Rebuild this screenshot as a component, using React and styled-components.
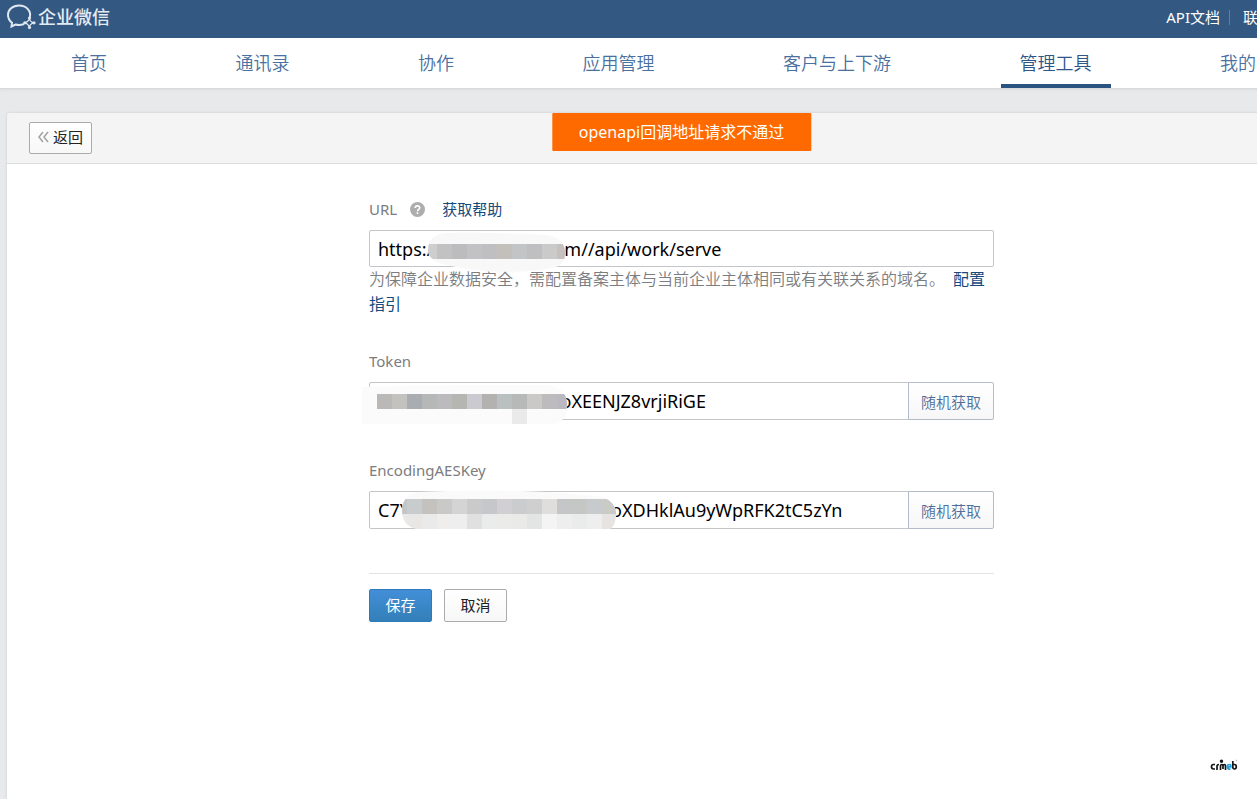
import React from "react";
import styled, { createGlobalStyle, css } from "styled-components";

const GlobalStyle = createGlobalStyle`
  * {
    box-sizing: border-box;
  }
  body {
    margin: 0;
    background: #e8e9eb;
    font-family: "Noto Sans", "Noto Sans CJK SC", sans-serif;
    font-size: 15px;
  }
  button, input {
    font-family: inherit;
  }
  a {
    text-decoration: none;
  }
`;

const Viewport = styled.div`
  overflow-x: hidden;
`;
const Page = styled.div`
  display: flex;
  flex-direction: column;
  min-width: 1363px;
  min-height: 100vh;
`;

const TopBar = styled.header`
  display: flex;
  align-items: center;
  justify-content: space-between;
  height: 38px;
  padding: 0 7px 4px;
  background: #335983;
`;
const Brand = styled.a`
  display: flex;
  align-items: center;
  gap: 2px;
  color: #e4eaf2;
  font-size: 18px;
  font-weight: 500;
  line-height: 24px;
`;
const TopLinks = styled.div`
  display: flex;
  align-items: center;
`;
const TopLink = styled.a`
  color: #fff;
  line-height: 20px;

  & + & {
    margin-left: 9px;
    padding-left: 14px;
    background: linear-gradient(#5f80a6, #5f80a6) left center / 1px 15px no-repeat;
  }
`;

const Nav = styled.nav`
  display: flex;
  justify-content: space-between;
  height: 51px;
  padding: 0 52px;
  background: #fff;
  border-bottom: 1px solid #d8d9db;
  box-shadow: 0 1px 3px rgba(0, 0, 0, 0.06);
`;
const NavItem = styled.a`
  height: 50px;
  padding: 0 19px;
  border-bottom: 4px solid ${(p) => (p.$active ? "#2b5380" : "transparent")};
  color: ${(p) => (p.$active ? "#2f5688" : "#4a70a0")};
  font-size: 18px;
  font-weight: 350;
  line-height: 50px;
`;

const Card = styled.main`
  position: relative;
  flex: 1;
  margin: 24px 7px 0;
  background: #fff;
  border-radius: 4px 4px 0 0;
  box-shadow: 0 0 3px rgba(0, 0, 0, 0.12);
`;
const CardHeader = styled.div`
  display: flex;
  align-items: center;
  height: 51px;
  padding: 0 22px;
  background: #f4f4f4;
  border-bottom: 1px solid #dcdddf;
  border-radius: 4px 4px 0 0;
`;
const Toast = styled.div`
  position: absolute;
  top: 0;
  left: 50%;
  transform: translateX(-50%);
  padding: 0 27px;
  background: #ff6a00;
  border-radius: 1px;
  color: #fff;
  font-size: 16px;
  line-height: 38px;
  white-space: nowrap;
`;

const Button = styled.button`
  display: inline-flex;
  align-items: center;
  justify-content: center;
  gap: 4px;
  width: 63px;
  height: ${(p) => (p.$small ? 32 : 33)}px;
  padding: 0 0 2px;
  border: 1px solid #a9abad;
  border-radius: 2px;
  background: linear-gradient(#fff, #f7f7f7);
  color: #222;
  font-size: 15px;
  line-height: 20px;

  ${(p) =>
    p.$primary &&
    css`
      border-color: #2f7bb9;
      background: linear-gradient(#428fd8, #327fb8);
      color: #fff;
    `}
`;

const Form = styled.form`
  width: 625px;
  margin: 0 auto;
  padding-top: 34px;
`;
const Field = styled.div`
  margin-bottom: ${(p) => p.$gap}px;
`;
const LabelRow = styled.div`
  display: flex;
  align-items: center;
  height: 22px;
  margin-bottom: 10px;
  color: #7b7d80;
  line-height: 22px;
`;
const HelpIcon = styled.svg`
  margin: 0 17px 0 13px;
`;
const Link = styled.a`
  color: #144a7c;
`;
const InputRow = styled.div`
  position: relative;
  display: flex;
`;
const TextInput = styled.input`
  flex: 1;
  min-width: 0;
  height: ${(p) => (p.$joined ? 38 : 37)}px;
  padding: 0 8px;
  border: 1px solid #c3c5c8;
  border-radius: ${(p) => (p.$joined ? "2px 0 0 2px" : "2px")};
  outline: none;
  color: #000;
  font-size: 18px;
`;
const RandomButton = styled.button`
  width: 86px;
  height: 38px;
  margin-left: -1px;
  padding: 1px 0 0;
  border: 1px solid #b3bccb;
  border-radius: 0 2px 2px 0;
  background: linear-gradient(#fff, #f7f7f7);
  color: #4f6f9b;
  font-size: 15px;
  font-weight: 350;
`;
const Mosaic = styled.svg`
  position: absolute;
  top: -5px;
  left: -7px;
  pointer-events: none;
`;
const Hint = styled.p`
  margin: 0;
  color: #7b7d80;
  font-size: 16px;
  font-weight: 350;
  line-height: 25px;

  ${Link} {
    margin-left: 8px;
    font-weight: 400;
  }
`;
const Actions = styled.div`
  display: flex;
  gap: 12px;
  padding-top: 15px;
  border-top: 1px solid #e3e4e6;
`;
const Watermark = styled.svg`
  position: fixed;
  right: 19px;
  bottom: 27px;
`;

const navItems = [
  "首页",
  "通讯录",
  "协作",
  "应用管理",
  "客户与上下游",
  "管理工具",
  "我的企业",
];

function Logo() {
  return (
    <svg width="29" height="26" viewBox="0 0 29 26" fill="none" stroke="#dfe7f0">
      <path
        d="M22.800 13.500C24.500 7 19.500 1.500 12 1.500C5.500 1.500 1 5.800 1 11C1 14.300 2.500 16.800 5 18.800L4.500 22.500L8.500 20.500C11.500 21.300 14.500 21 17 20"
        strokeWidth="2"
      />
      <path
        d="M22.500 14.500Q22.800 18 27 18.800Q22.800 19.500 22.500 23.500Q21.500 19.500 17.500 18.800Q21.500 18 22.500 14.500Z"
        strokeWidth="1.200"
      />
      <g fill="#dfe7f0" stroke="none">
        <circle cx="22.500" cy="14" r="1.600" />
        <circle cx="27" cy="18.800" r="1.600" />
        <circle cx="22.500" cy="23.500" r="1.600" />
        <circle cx="17.800" cy="18.800" r="1.600" />
      </g>
      <circle cx="22.400" cy="18.800" r="1.500" fill="#335983" stroke="none" />
    </svg>
  );
}

function Blocks({ x, y, colors }) {
  return colors.map((color, i) => (
    <rect key={i} x={x + i * 15} y={y} width="15" height="15" fill={color} />
  ));
}

function UrlMosaic() {
  return (
    <Mosaic width="220" height="50" aria-hidden="true">
      <clipPath id="url-clip">
        <path d="M66 25C66 14 72 9 84 8C125 7 165 9 184 10C198 12 204 20 203 29C203 38 199 41 190 43C170 48 120 48 100 43C80 40 66 36 66 25Z" />
      </clipPath>
      <g clipPath="url(#url-clip)">
        <rect width="220" height="50" fill="#f8f8f8" />
        <Blocks
          x={60}
          y={19}
          colors={["#cfcecf", "#c3c2c3", "#bcbbbe", "#c2c2c4", "#bfbec0", "#c3bfbb", "#c3c4c6", "#bfbfc1", "#cacacb", "#c7c1be"]}
        />
      </g>
    </Mosaic>
  );
}

function TokenMosaic() {
  return (
    <Mosaic width="220" height="50" aria-hidden="true">
      <clipPath id="token-clip">
        <path d="M0 10C60 8 120 8 185 8C198 9 205 17 205 27C205 38 200 47 192 47H0Z" />
      </clipPath>
      <g clipPath="url(#token-clip)">
        <rect width="220" height="50" fill="#fbfbfb" />
        <Blocks
          x={15}
          y={17}
          colors={["#bab9b8", "#c3c2bf", "#a9adb2", "#b6b8b7", "#bcbabc", "#b5b6b1", "#cacad0", "#b4b2b0", "#babfc0", "#b7b8b8", "#cac9c8", "#bdbbbe", "#bab9c2"]}
        />
        <Blocks x={150} y={32} colors={["#eaeaea"]} />
      </g>
    </Mosaic>
  );
}

function KeyMosaic() {
  return (
    <Mosaic width="270" height="50" aria-hidden="true">
      <clipPath id="key-clip">
        <path d="M40 25C40 14 46 8 56 6C110 3 190 4 240 11C250 14 255 22 254 30C253 38 251 43 246 43H56C46 42 40 35 40 25Z" />
      </clipPath>
      <g clipPath="url(#key-clip)">
        <rect width="270" height="50" fill="#fafafa" />
        <Blocks
          x={30}
          y={13}
          colors={["#c4c5c7", "#c8cccd", "#c4c2be", "#c9c9c7", "#d4d4d4", "#cacacb", "#c5c7ca", "#d1cfd1", "#cbcccd", "#cfcfcf", "#dfdedc", "#c5c6c7", "#c5c7c5", "#c8cbce", "#cacbc6"]}
        />
        <Blocks
          x={30}
          y={28}
          colors={["#e9e8e7", "#e8e7e6", "#eaeaea", "#efeeec", "#eeeeee", "#e0e0e0", "#eaecec", "#ebebe9", "#eaeae8", "#e3e5e5", "#f4f4f4", "#eeeeee", "#eaecec", "#eeeeee", "#e6e4e3"]}
        />
      </g>
    </Mosaic>
  );
}

function App() {
  return (
    <Viewport>
      <GlobalStyle />
      <Page>
        <TopBar>
          <Brand href="#">
            <Logo />
            企业微信
          </Brand>
          <TopLinks>
            <TopLink href="#">API文档</TopLink>
            <TopLink href="#">联系客服</TopLink>
            <TopLink href="#">退出</TopLink>
          </TopLinks>
        </TopBar>
        <Nav>
          {navItems.map((item) => (
            <NavItem key={item} href="#" $active={item === "管理工具"}>
              {item}
            </NavItem>
          ))}
        </Nav>
        <Card>
          <CardHeader>
            <Button type="button" $small>
              <svg width="11" height="12" fill="none" stroke="#a0a2a4" strokeWidth="1.500">
                <path d="M5 1L1 6L5 11M10 1L6 6L10 11" />
              </svg>
              返回
            </Button>
          </CardHeader>
          <Toast role="alert">openapi回调地址请求不通过</Toast>
          <Form>
            <Field $gap={33}>
              <LabelRow>
                <label htmlFor="url">URL</label>
                <HelpIcon width="15" height="15" viewBox="0 0 15 15">
                  <circle cx="7.500" cy="7.500" r="7.500" fill="#adadad" />
                  <path
                    d="M5.200 6C5.200 3.200 9.800 3.200 9.800 5.800C9.800 7.300 7.500 7.300 7.500 9.200M7.500 10.300V12"
                    fill="none"
                    stroke="#fff"
                    strokeWidth="1.600"
                  />
                </HelpIcon>
                <Link href="#">获取帮助</Link>
              </LabelRow>
              <InputRow>
                <TextInput
                  id="url"
                  defaultValue={"https:/" + " ".repeat(28) + "m//api/work/serve"}
                />
                <UrlMosaic />
              </InputRow>
              <Hint>
                为保障企业数据安全，需配置备案主体与当前企业主体相同或有关联关系的域名。
                <Link href="#">配置指引</Link>
              </Hint>
            </Field>
            <Field $gap={39}>
              <LabelRow>
                <label htmlFor="token">Token</label>
              </LabelRow>
              <InputRow>
                <TextInput
                  id="token"
                  $joined
                  defaultValue={" ".repeat(39) + "oXEENJZ8vrjiRiGE"}
                />
                <RandomButton type="button">随机获取</RandomButton>
                <TokenMosaic />
              </InputRow>
            </Field>
            <Field $gap={44}>
              <LabelRow>
                <label htmlFor="aes-key">EncodingAESKey</label>
              </LabelRow>
              <InputRow>
                <TextInput
                  id="aes-key"
                  $joined
                  defaultValue={"C7Y" + " ".repeat(43) + "oXDHklAu9yWpRFK2tC5zYn"}
                />
                <RandomButton type="button">随机获取</RandomButton>
                <KeyMosaic />
              </InputRow>
            </Field>
            <Actions>
              <Button type="submit" $primary>
                保存
              </Button>
              <Button type="button">取消</Button>
            </Actions>
          </Form>
        </Card>
      </Page>
      <Watermark width="28" height="13" viewBox="0 0 28 13" fill="none" stroke="#151515" strokeWidth="1.700">
        <path d="M5 5.500H3.500Q1.500 5.500 1.500 7.800Q1.500 10 3.500 10H5M7 11V7.500Q7 5.500 9 5.500M10.500 11V7Q10.500 5.500 12 5.500Q13 5.500 13 7V10M13 7Q13 5.500 14.300 5.500Q15.500 5.500 15.500 7V11" />
        <circle cx="11.500" cy="2.200" r="0.900" />
        <path d="M20.500 10.200H19.500Q17.300 10 17.300 7.800Q17.300 5.500 19.200 5.500Q21 5.500 20.800 7.800H17.500" stroke="#1c9fe0" />
        <path d="M22.800 2V7.800Q22.800 10 24.500 10Q26.300 10 26.300 7.800Q26.300 5.500 24.500 5.500H23.500" />
        <circle cx="26.500" cy="1.500" r="0.500" stroke="#bbb" strokeWidth="1" />
      </Watermark>
    </Viewport>
  );
}

export default App;
